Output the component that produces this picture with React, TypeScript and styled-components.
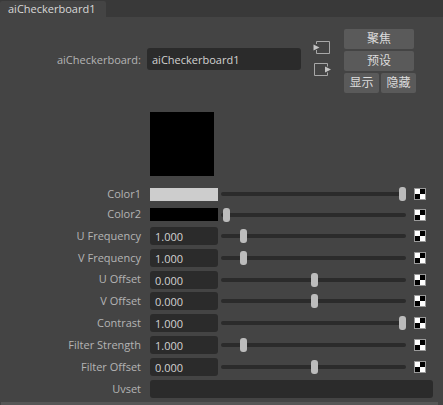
import styled, { createGlobalStyle } from 'styled-components';

const GlobalStyle = createGlobalStyle`
  html, body {
    margin: 0;
    padding: 0;
    background: #444444;
  }
  body {
    font-family: "Open Sans", "Noto Sans CJK SC", sans-serif;
    font-size: 11px;
    color: #bdbdbd;
  }
`;

const Window = styled.div`
  display: flex;
  flex-direction: column;
  width: 443px;
  height: 405px;
  overflow: hidden;
  background: #444444;
`;

const TabBar = styled.div`
  height: 17px;
  box-sizing: border-box;
  padding-top: 1px;
  background: #393939;
`;

const Tab = styled.div`
  width: 106px;
  height: 16px;
  box-sizing: border-box;
  padding-left: 8px;
  line-height: 16px;
  color: #d8d8d8;
  background: #444444;
  border-radius: 2px 2px 0 0;
`;

const Header = styled.div`
  display: flex;
  height: 76px;
  padding-top: 12px;
`;

const NameLabel = styled.div`
  width: 141px;
  margin-top: 20px;
  line-height: 22px;
  text-align: right;
  color: #b4b4b4;
`;

const NameField = styled.div`
  width: 154px;
  height: 22px;
  box-sizing: border-box;
  margin: 19px 0 0 6px;
  padding: 1px 0 0 5px;
  line-height: 21px;
  color: #d2d2d2;
  background: #2b2b2b;
  border-radius: 3px;
`;

const Connectors = styled.div`
  display: flex;
  flex-direction: column;
  gap: 8px;
  width: 18px;
  margin: 11px 0 0 12px;
`;

const Actions = styled.div`
  display: flex;
  flex-direction: column;
  gap: 2px;
  margin-left: 13px;
`;

const ActionRow = styled.div`
  display: flex;
  gap: 2px;
`;

const ActionButton = styled.button<{ $wide?: boolean }>`
  width: ${(p) => (p.$wide ? 70 : 35)}px;
  height: 20px;
  padding: 0;
  border: 0;
  border-radius: 2px;
  font: inherit;
  font-size: 12px;
  line-height: 20px;
  color: #dcdcdc;
  background: #5a5a5a;
`;

const Preview = styled.div`
  width: 64px;
  height: 64px;
  margin: 7px 0 0 150px;
  background: #000000;
`;

const Rows = styled.div`
  display: flex;
  flex-direction: column;
  margin-top: 8px;
`;

const Row = styled.div<{ $height: number }>`
  display: flex;
  align-items: center;
  height: ${(p) => p.$height}px;
`;

const Label = styled.div`
  width: 141px;
  margin-bottom: 2px;
  text-align: right;
  color: #b4b4b4;
`;

const Swatch = styled.div<{ $color: string }>`
  width: 68px;
  height: 13px;
  margin-left: 9px;
  background: ${(p) => p.$color};
`;

const ValueField = styled.div`
  width: 68px;
  height: 18px;
  box-sizing: border-box;
  margin-left: 9px;
  padding: 1px 0 0 5px;
  line-height: 17px;
  color: #d2d2d2;
  background: #2b2b2b;
  border-radius: 3px;
`;

const UvField = styled.div`
  width: 283px;
  height: 18px;
  margin-left: 9px;
  background: #2b2b2b;
  border-radius: 3px;
`;

const Track = styled.div`
  position: relative;
  width: 185px;
  height: 4px;
  margin-left: 3px;
  background: #2b2b2b;
  border-radius: 2px;
`;

const Thumb = styled.div<{ $center: number }>`
  position: absolute;
  top: -5px;
  left: ${(p) => p.$center - 3.5}px;
  width: 7px;
  height: 14px;
  background: #bcbcbc;
  border-radius: 3px;
`;

const FooterEdge = styled.div`
  width: 437px;
  height: 3px;
  margin: auto 0 0 1px;
  background: #565656;
`;

const MapButton = styled.svg`
  flex: none;
  margin-left: 8px;
`;

const CheckerIcon = () => (
  <MapButton width="12" height="12" viewBox="0 0 12 12">
    <rect width="12" height="12" fill="#ffffff" />
    <rect x="6" y="1" width="5" height="5" fill="#000000" />
    <rect x="1" y="6" width="5" height="5" fill="#000000" />
    <rect x="0.5" y="0.5" width="11" height="11" fill="none" stroke="#9a9a9a" />
  </MapButton>
);

const InputIcon = () => (
  <svg width="18" height="14" viewBox="0 0 18 14">
    <path d="M3.5 4V1.5H16.5V13.5H3.5V10" fill="none" stroke="#a8a8a8" />
    <path d="M0.5 4.5V10.5L6.5 7.5Z" fill="#c4c4c4" />
  </svg>
);

const OutputIcon = () => (
  <svg width="18" height="14" viewBox="0 0 18 14">
    <path d="M14.5 4.5V1.5H1.5V13.5H14.5V10.5" fill="none" stroke="#a8a8a8" />
    <path d="M12 4.5V10.5L18 7.5Z" fill="#c4c4c4" />
  </svg>
);

type Attr = {
  label: string;
  value: string;
  center: number;
  color?: string;
  height: number;
};

const attrs: Attr[] = [
  { label: 'Color1', value: '', center: 181, color: '#cdcdcd', height: 20 },
  { label: 'Color2', value: '', center: 5, color: '#000000', height: 21 },
  { label: 'U Frequency', value: '1.000', center: 22, height: 22 },
  { label: 'V Frequency', value: '1.000', center: 22, height: 22 },
  { label: 'U Offset', value: '0.000', center: 93, height: 21 },
  { label: 'V Offset', value: '0.000', center: 93, height: 22 },
  { label: 'Contrast', value: '1.000', center: 181, height: 22 },
  { label: 'Filter Strength', value: '1.000', center: 22, height: 22 },
  { label: 'Filter Offset', value: '0.000', center: 93, height: 22 },
];

const App = () => (
  <Window>
    <GlobalStyle />
    <TabBar>
      <Tab>aiCheckerboard1</Tab>
    </TabBar>
    <Header>
      <NameLabel>aiCheckerboard:</NameLabel>
      <NameField>aiCheckerboard1</NameField>
      <Connectors>
        <InputIcon />
        <OutputIcon />
      </Connectors>
      <Actions>
        <ActionButton $wide>聚焦</ActionButton>
        <ActionButton $wide>预设</ActionButton>
        <ActionRow>
          <ActionButton>显示</ActionButton>
          <ActionButton>隐藏</ActionButton>
        </ActionRow>
      </Actions>
    </Header>
    <Preview />
    <Rows>
      {attrs.map((attr) => (
        <Row key={attr.label} $height={attr.height}>
          <Label>{attr.label}</Label>
          {attr.color ? <Swatch $color={attr.color} /> : <ValueField>{attr.value}</ValueField>}
          <Track>
            <Thumb $center={attr.center} />
          </Track>
          <CheckerIcon />
        </Row>
      ))}
      <Row $height={22}>
        <Label>Uvset</Label>
        <UvField />
      </Row>
    </Rows>
    <FooterEdge />
  </Window>
);

export default App;
